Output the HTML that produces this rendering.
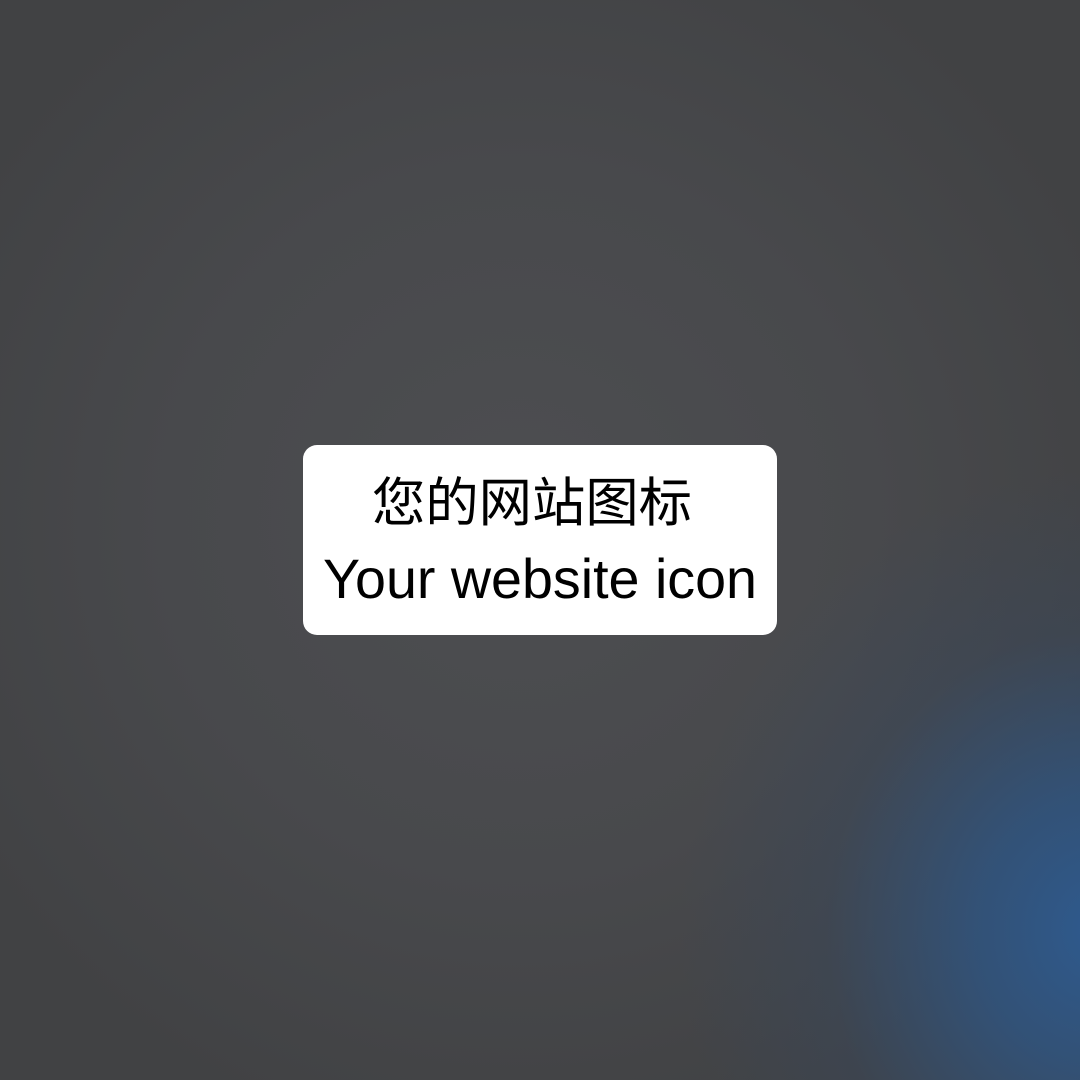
<!DOCTYPE html>
<html><head><meta charset="utf-8"><style>
html,body{margin:0;padding:0;}
body{width:1080px;height:1080px;overflow:hidden;position:relative;
background:
radial-gradient(ellipse 420px 460px at 1100px 930px, rgba(46,90,142,1) 0%, rgba(47,85,130,0.8) 30%, rgba(55,72,95,0.4) 65%, rgba(60,68,80,0) 100%),
radial-gradient(ellipse 640px 640px at 520px 520px, #4d4e51 0%, #48494c 55%, #414244 100%);
}
.box{position:absolute;left:303px;top:445px;width:474px;height:190px;background:#fff;border-radius:14px;}
svg{position:absolute;left:0;top:0;}
</style></head><body>
<div class="box"></div>
<svg width="1080" height="1080">
<text x="372" y="521" font-family="'Liberation Sans','Noto Sans CJK SC',sans-serif" font-size="53" fill="#000" textLength="320" lengthAdjust="spacingAndGlyphs">您的网站图标</text>
<text x="323" y="598" font-family="'Liberation Sans','Noto Sans CJK SC',sans-serif" font-size="56" fill="#000" textLength="434" lengthAdjust="spacingAndGlyphs">Your website icon</text>
</svg>
</body></html>
